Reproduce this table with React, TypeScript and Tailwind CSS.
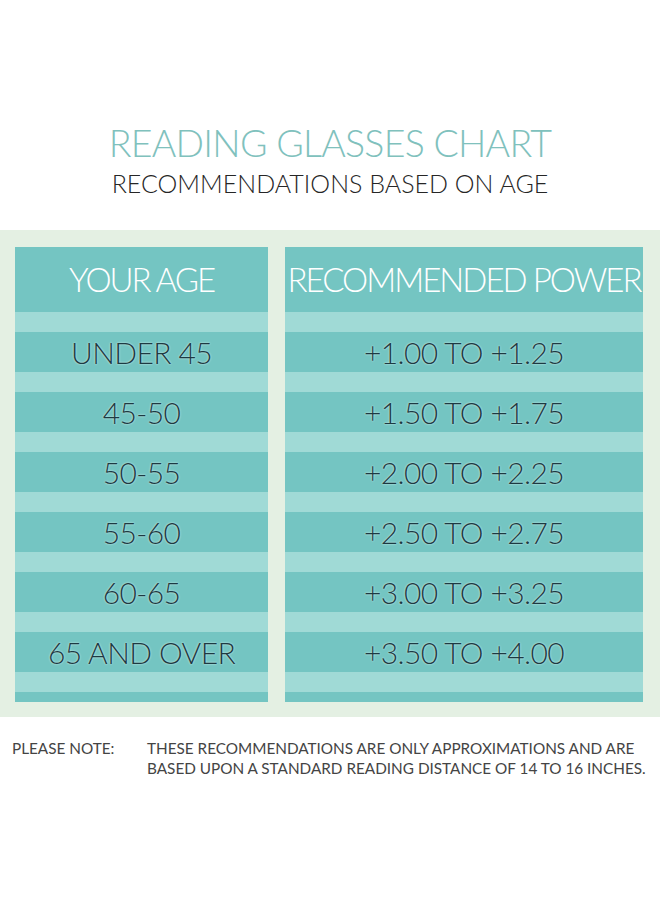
const rows = [
  { age: 'UNDER 45', power: '+1.00 TO +1.25' },
  { age: '45-50', power: '+1.50 TO +1.75' },
  { age: '50-55', power: '+2.00 TO +2.25' },
  { age: '55-60', power: '+2.50 TO +2.75' },
  { age: '60-65', power: '+3.00 TO +3.25' },
  { age: '65 AND OVER', power: '+3.50 TO +4.00' },
];

const font = "font-['Lato','Open_Sans',sans-serif]";

function Column({ title, values, width }: { title: string; values: string[]; width: string }) {
  return (
    <div className={`flex flex-col ${width}`}>
      {/* header */}
      <div className="flex h-[65px] items-center justify-center bg-[#74c5c2]">
        <span className="whitespace-nowrap text-[33px] font-light leading-none tracking-[-0.06em] text-white">
          {title}
        </span>
      </div>
      {values.map((v) => (
        <div key={v}>
          <div className="h-[20px] bg-[#a0dad6]" />
          <div className="flex h-[40px] items-center justify-center bg-[#74c5c2]">
            <span className="whitespace-nowrap text-[30px] font-light leading-none tracking-[-0.02em] text-[#1d3a42] [text-shadow:0_0_2px_#e3f6f4]">
              {v}
            </span>
          </div>
        </div>
      ))}
      <div className="h-[20px] bg-[#a0dad6]" />
      <div className="h-[10px] bg-[#74c5c2]" />
    </div>
  );
}

export default function App() {
  return (
    <div className={`h-[900px] w-[660px] bg-white ${font}`}>
      {/* ── Title ───────────────────────────────────── */}
      <div className="flex h-[230px] flex-col items-center pt-[124px]">
        <h1 className="whitespace-nowrap text-[37.5px] font-light leading-none tracking-[-0.02em] text-[#80c1bd]">
          READING GLASSES CHART
        </h1>
        <p className="mt-[9px] whitespace-nowrap text-[25px] font-light leading-none text-[#262626]">
          RECOMMENDATIONS BASED ON AGE
        </p>
      </div>

      {/* ── Chart ───────────────────────────────────── */}
      <div className="flex gap-[17px] bg-[#e4f0e3] pb-[15px] pl-[15px] pr-[17px] pt-[17px]">
        <Column title="YOUR AGE" values={rows.map((r) => r.age)} width="w-[253px]" />
        <Column title="RECOMMENDED POWER" values={rows.map((r) => r.power)} width="w-[358px]" />
      </div>

      {/* ── Note ────────────────────────────────────── */}
      <div className="flex whitespace-nowrap pt-[21px] text-[15.3px] leading-[20px] text-[#444]">
        <div className="w-[147px] pl-[12px]">PLEASE NOTE:</div>
        <div>
          <div>THESE RECOMMENDATIONS ARE ONLY APPROXIMATIONS AND ARE</div>
          <div>BASED UPON A STANDARD READING DISTANCE OF 14 TO 16 INCHES.</div>
        </div>
      </div>
    </div>
  );
}
